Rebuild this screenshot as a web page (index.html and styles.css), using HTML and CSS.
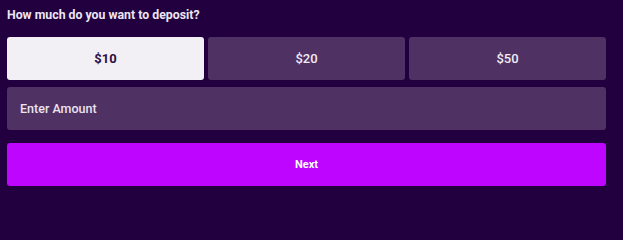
FILE: index.html
```html
<!DOCTYPE html>
<html>
<head>
<meta charset="utf-8">
<link rel="stylesheet" href="styles.css">
</head>
<body>
<div class="deposit">
  <h2 class="title">How much do you want to deposit?</h2>
  <div class="amounts">
    <button class="amount selected">$10</button>
    <button class="amount">$20</button>
    <button class="amount">$50</button>
  </div>
  <div class="input">Enter Amount</div>
  <button class="next">Next</button>
</div>
</body>
</html>
```
FILE: styles.css
```css
html, body {
  margin: 0;
  padding: 0;
  background: #22003f;
  width: 623px;
  height: 214px;
  overflow: hidden;
  font-family: Roboto, "Liberation Sans", sans-serif;
}
.deposit {
  padding: 7px 17px 0 7px;
  display: flex;
  flex-direction: column;
}
.title {
  margin: 0;
  font-size: 12.3px;
  font-weight: 700;
  color: #ece6f3;
  line-height: 16px;
  height: 30px;
}
.amounts {
  display: grid;
  grid-template-columns: 1fr 1fr 1fr;
  gap: 4px;
  height: 43px;
}
.amount {
  border: none;
  border-radius: 3px;
  background: #4f3263;
  color: #f1ecf6;
  font-family: inherit;
  font-size: 13px;
  font-weight: 500;
  padding: 0;
}
.amount.selected {
  background: #f2eff5;
  color: #2b1041;
  font-weight: 700;
}
.input {
  margin-top: 7px;
  height: 43px;
  border-radius: 3px;
  background: #4f3263;
  color: #ebe3f1;
  font-size: 12.5px;
  font-weight: 500;
  display: flex;
  align-items: center;
  padding-left: 13px;
  box-sizing: border-box;
}
.next {
  margin-top: 13px;
  height: 43px;
  border: none;
  border-radius: 3px;
  background: #bd05ff;
  color: #ffffff;
  font-family: inherit;
  font-size: 11px;
  font-weight: 700;
  padding: 0;
}
```
